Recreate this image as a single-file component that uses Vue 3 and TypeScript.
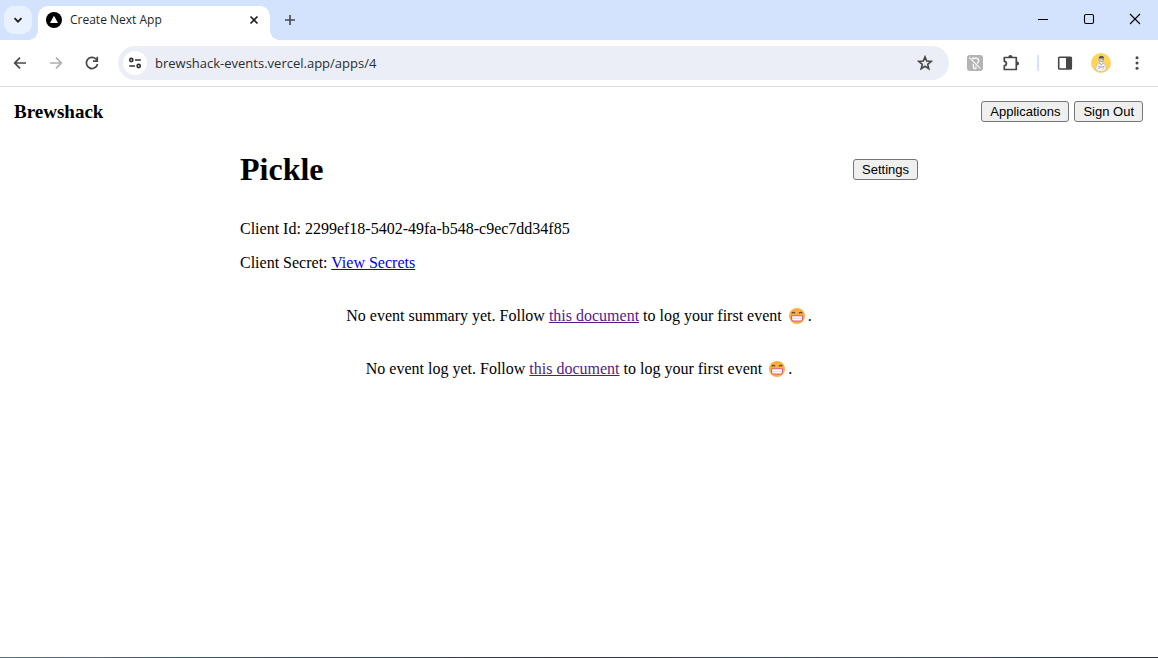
<script setup lang="ts">
import { ref } from 'vue'

interface EmptyState {
  id: string
  label: string
}

const address = ref('brewshack-events.vercel.app/apps/4')
const clientId = '2299ef18-5402-49fa-b548-c9ec7dd34f85'
const emptyStates: EmptyState[] = [
  { id: 'summary', label: 'No event summary yet.' },
  { id: 'log', label: 'No event log yet.' },
]
</script>

<template>
  <div class="window">
    <div class="tab-strip">
      <button class="tab-search" type="button" aria-label="Search tabs">
        <svg width="12" height="12" viewBox="0 0 12 12"><path d="M2.5 4.2 6 7.7l3.5-3.5" fill="none" stroke="#1f1f1f" stroke-width="1.8" /></svg>
      </button>
      <div class="tab">
        <svg width="16" height="16" viewBox="0 0 16 16" aria-hidden="true">
          <circle cx="8" cy="8" r="8" fill="#000" />
          <path d="M8 3.8 12 11H4z" fill="#fff" />
        </svg>
        <span class="tab-title">Create Next App</span>
        <button class="tab-close" type="button" aria-label="Close tab">
          <svg width="10" height="10" viewBox="0 0 10 10"><path d="m1.5 1.5 7 7m0-7-7 7" stroke="#1f1f1f" stroke-width="1.6" /></svg>
        </button>
      </div>
      <button class="new-tab" type="button" aria-label="New tab">
        <svg width="12" height="12" viewBox="0 0 12 12"><path d="M6 1v10M1 6h10" stroke="#474747" stroke-width="1.6" /></svg>
      </button>
      <div class="window-controls">
        <button type="button" aria-label="Minimize">
          <svg width="12" height="12" viewBox="0 0 12 12"><path d="M1 6.5h10" stroke="#000" /></svg>
        </button>
        <button type="button" aria-label="Maximize">
          <svg width="12" height="12" viewBox="0 0 12 12"><rect x="1.5" y="1.5" width="9" height="9" rx="1.5" fill="none" stroke="#000" stroke-width="1.1" /></svg>
        </button>
        <button type="button" aria-label="Close">
          <svg width="12" height="12" viewBox="0 0 12 12"><path d="m1 1 10 10M11 1 1 11" stroke="#000" stroke-width="1.1" /></svg>
        </button>
      </div>
    </div>

    <div class="toolbar">
      <div class="nav">
        <button type="button" aria-label="Back">
          <svg width="16" height="16" viewBox="0 0 16 16"><path d="M14 8H3.2M8 2.7 2.7 8 8 13.3" fill="none" stroke="#474747" stroke-width="1.7" /></svg>
        </button>
        <button type="button" aria-label="Forward">
          <svg width="16" height="16" viewBox="0 0 16 16"><path d="M2 8h10.8M8 2.7 13.3 8 8 13.3" fill="none" stroke="#b0b0b0" stroke-width="1.7" /></svg>
        </button>
        <button type="button" aria-label="Reload">
          <svg width="16" height="16" viewBox="0 0 16 16"><path d="M13.5 9A5.6 5.6 0 1 1 12 4l1.4 1.5" fill="none" stroke="#474747" stroke-width="1.7" /><path d="M14.1 1.8v5.1H9V5.3h3.4V1.8z" fill="#474747" /></svg>
        </button>
      </div>
      <div class="omnibox">
        <button class="site-info" type="button" aria-label="View site information">
          <svg width="14" height="14" viewBox="0 0 14 14" fill="none" stroke="#303030" stroke-width="1.6">
            <circle cx="3.3" cy="4" r="1.6" /><path d="M7 4h5.8M1.2 10H7" /><circle cx="10.7" cy="10" r="1.6" />
          </svg>
        </button>
        <input v-model="address" class="address" type="text" aria-label="Address" spellcheck="false" />
        <button class="bookmark" type="button" aria-label="Bookmark this tab">
          <svg width="16" height="16" viewBox="0 0 16 16"><path d="m8 1.9 1.7 4.200 4.500.3-3.500 2.900 1.100 4.400L8 11.300l-3.800 2.400 1.100-4.400-3.500-2.900 4.500-.3z" fill="none" stroke="#474747" stroke-width="1.6" /></svg>
        </button>
      </div>
      <div class="extensions">
        <button type="button" aria-label="Color picker extension">
          <svg width="16" height="16" viewBox="0 0 16 16">
            <rect width="16" height="16" rx="3" fill="#b3b3b5" />
            <path d="M5.500 3.300h3.300a2.700 2.700 0 0 1 .3 5.400v3.800a1.300 1.300 0 0 1-2.600 0V7.500z" fill="none" stroke="#f5f5f5" stroke-width="1.500" />
            <path d="m2 2.500 11.500 11.500" stroke="#b3b3b5" stroke-width="2.600" />
            <path d="m2.300 2.500 11 11" stroke="#f5f5f5" stroke-width="1.100" />
          </svg>
        </button>
        <button type="button" aria-label="Extensions">
          <svg width="18" height="18" viewBox="0 0 18 18"><path d="M2.3 3.5h12v12h-12v-3.8c2.8-.2 2.8-4.2 0-4.4z" fill="none" stroke="#474747" stroke-width="1.7" stroke-linejoin="round" /><path d="M6.3 3a2.1 2.1 0 0 1 4.2 0zM15 7.4a2.1 2.1 0 0 1 0 4.2z" fill="#474747" /></svg>
        </button>
        <span class="separator"></span>
        <button type="button" aria-label="Side panel">
          <svg width="16" height="16" viewBox="0 0 16 16"><rect x="1.7" y="2.2" width="12.6" height="11.8" rx=".8" fill="none" stroke="#474747" stroke-width="1.6" /><path d="M9 2h5.5v12H9z" fill="#474747" /></svg>
        </button>
        <button type="button" aria-label="Profile">
          <svg width="20" height="20" viewBox="0 0 20 20">
            <circle cx="10" cy="10" r="10" fill="#ffd45a" />
            <path d="M5 17.2c-.4-4 .7-6.5 3.8-7L8.3 8h3.8l-.3 2.3c3 .6 3.8 3 3.3 6.7-3 1.8-7 1.8-10.1.2z" fill="#f4f4f4" stroke="#aaa" stroke-width=".5" />
            <circle cx="10.3" cy="6" r="2.4" fill="#eee" stroke="#777" stroke-width=".6" />
            <path d="M7.9 5.4C7.4 2 12.8 1.8 13 5l-1 .6H8z" fill="#555" />
            <path d="M9 6.2h3.2M7 13l3 1.2 3.4-1M8.7 10l1.5 2 1.4-1.8M7.3 15.6l2-1.2m2.2 1.3 1.7-1.3" fill="none" stroke="#777" stroke-width=".6" />
          </svg>
        </button>
        <button type="button" aria-label="Menu">
          <svg width="16" height="16" viewBox="0 0 16 16" fill="#474747"><circle cx="8" cy="2.7" r="1.5" /><circle cx="8" cy="8" r="1.5" /><circle cx="8" cy="13.3" r="1.5" /></svg>
        </button>
      </div>
    </div>

    <div class="page">
      <header class="site-header">
        <h3>Brewshack</h3>
        <nav class="site-nav">
          <button class="btn" type="button">Applications</button>
          <button class="btn" type="button">Sign Out</button>
        </nav>
      </header>
      <main class="content">
        <div class="app-heading">
          <h1>Pickle</h1>
          <button class="btn" type="button">Settings</button>
        </div>
        <p>Client Id: {{ clientId }}</p>
        <p>Client Secret: <a class="link" href="#secrets">View Secrets</a></p>
        <p v-for="state in emptyStates" :key="state.id" class="empty">
          {{ state.label }} Follow <a class="link visited" href="#document">this document</a> to log your first event
          <svg class="emoji" width="22" height="16" viewBox="0 0 22 16" role="img" aria-label="Grinning face">
            <circle cx="11" cy="8" r="8" fill="#fcb03c" />
            <path d="M5.700 5.400c.9-1.300 2.400-1.300 3.300 0m4 0c.9-1.300 2.400-1.300 3.300 0" fill="none" stroke="#5c4630" stroke-width="1.200" />
            <path d="M5.500 7.800h11v3.200q0 2-2 2h-7q-2 0-2-2z" fill="#fff" stroke="#c8507c" stroke-width=".9" />
            <path d="M6 10.500h10" stroke="#d9b9d0" stroke-width=".6" />
          </svg>.
        </p>
      </main>
    </div>
    <div class="desktop-edge"></div>
  </div>
</template>

<style>
body {
  margin: 0;
  background: #fff;
}
</style>

<style scoped>
.window {
  display: flex;
  flex-direction: column;
  min-height: 100vh;
  background: #fff;
  color: #000;
  font-family: "Liberation Serif", "Times New Roman", serif;
  font-size: 16px;
}

.window svg {
  display: block;
}

.tab-strip button,
.toolbar button {
  display: flex;
  align-items: center;
  justify-content: center;
  flex: none;
  padding: 0;
  border: 0;
  background: transparent;
}

.tab-strip {
  display: flex;
  align-items: flex-start;
  height: 40px;
  background: #d3e3fd;
}

.tab-strip .tab-search {
  width: 28px;
  height: 28px;
  margin: 6px 6px 0 4px;
  border-radius: 10px;
  background: #e9f1fe;
}

.tab {
  position: relative;
  display: flex;
  align-items: center;
  box-sizing: border-box;
  width: 232px;
  height: 34px;
  margin-top: 6px;
  padding: 0 8px 6px;
  border-radius: 10px 10px 0 0;
  background: #fff;
}

.tab::before,
.tab::after {
  content: "";
  position: absolute;
  bottom: 0;
  width: 10px;
  height: 10px;
}

.tab::before {
  right: 100%;
  background: radial-gradient(circle at 0 0, transparent 10px, #fff 10px);
}

.tab::after {
  left: 100%;
  background: radial-gradient(circle at 100% 0, transparent 10px, #fff 10px);
}

.tab-title {
  flex: 1;
  margin-left: 8px;
  color: #1f1f1f;
  font: 12px/18px "Open Sans", "Noto Sans", sans-serif;
}

.tab-strip .tab-close {
  width: 16px;
  height: 16px;
}

.tab-strip .new-tab {
  width: 28px;
  height: 28px;
  margin: 6px 0 0 6px;
}

.window-controls {
  display: flex;
  margin-left: auto;
}

.window-controls button {
  width: 46px;
  height: 38px;
}

.toolbar {
  display: flex;
  align-items: center;
  height: 46px;
  border-bottom: 1px solid #dedfe0;
  background: #fff;
}

.nav {
  display: flex;
  gap: 8px;
  margin: 0 12px 0 6px;
}

.nav button {
  width: 28px;
  height: 28px;
}

.omnibox {
  display: flex;
  flex: 1;
  align-items: center;
  height: 34px;
  border-radius: 17px;
  background: #ebeef7;
}

.omnibox .site-info {
  width: 24px;
  height: 24px;
  margin: 0 8px 0 5px;
  border-radius: 12px;
  background: #fff;
}

.address {
  flex: 1;
  min-width: 0;
  padding: 0;
  border: 0;
  outline: 0;
  background: transparent;
  color: #2c2d30;
  font: 13px/20px "Open Sans", "Noto Sans", sans-serif;
}

.omnibox .bookmark {
  width: 24px;
  height: 24px;
  margin-right: 12px;
}

.extensions {
  display: flex;
  align-items: center;
  margin: 0 7px 0 12px;
}

.extensions button {
  width: 28px;
  height: 28px;
  margin-right: 8px;
}

.extensions button:last-child {
  margin-right: 0;
}

.extensions .separator {
  width: 2px;
  height: 16px;
  margin: 0 12px 0 4px;
  background: #d3e3fd;
}

.page {
  flex: 1;
}

.site-header {
  display: flex;
  align-items: center;
  justify-content: space-between;
  padding: 14px 15px 14px 14px;
}

h1,
h3 {
  margin: 0;
}

h3 {
  font-size: 19px;
  line-height: 20px;
}

h1 {
  font-size: 32px;
  line-height: 37px;
}

.site-nav {
  display: flex;
  gap: 5px;
}

.btn {
  height: 21px;
  padding: 0 8px;
  border: 1px solid #767676;
  border-radius: 3px;
  background: #efefef;
  color: #000;
  font: 13px/15px "Liberation Sans", Arial, sans-serif;
}

.content {
  box-sizing: border-box;
  max-width: 678px;
  margin: 0 auto;
}

.app-heading {
  display: flex;
  align-items: center;
  justify-content: space-between;
  margin: 15px 0 32px;
}

p {
  margin: 0 0 16px;
  line-height: 18px;
}

.content .empty {
  margin: 35px 0;
  text-align: center;
}

.content .emoji {
  display: inline-block;
  vertical-align: -3px;
}

.link {
  color: #0000ee;
}

.visited {
  color: #551a8b;
}

.desktop-edge {
  height: 1px;
  background: linear-gradient(90deg, #397ca9, #32476f 25%, #353148 50%, #344b80 74%, #292d49);
}
</style>
